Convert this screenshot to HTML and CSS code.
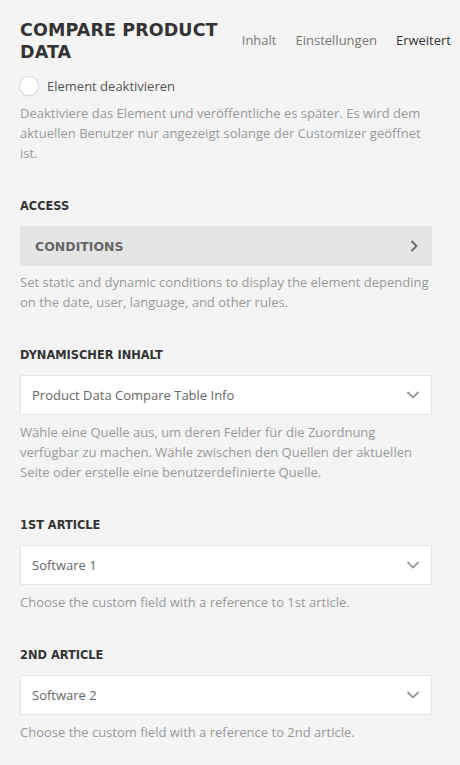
FILE: index.html
```html
<!DOCTYPE html>
<html lang="de">
<head>
  <meta charset="UTF-8" />
  <meta name="viewport" content="width=device-width, initial-scale=1.0"/>
  <title>Compare Product Data</title>
  <link rel="stylesheet" href="styles.css">
</head>
<body>
  <header class="panel-header">
    <h1>Compare Product Data</h1>
    <nav class="tabs">
      <a href="#">Inhalt</a>
      <a href="#">Einstellungen</a>
      <a href="#" class="active">Erweitert</a>
    </nav>
  </header>

  <!-- Disable toggle -->
  <section class="field first">
    <label class="toggle">
      <span class="knob"></span>
      Element deaktivieren
    </label>
    <p class="desc">Deaktiviere das Element und veröffentliche es später. Es wird dem aktuellen Benutzer nur angezeigt solange der Customizer geöffnet ist.</p>
  </section>

  <!-- Access -->
  <section class="field">
    <h3>Access</h3>
    <div class="conditions">
      <span>Conditions</span>
      <svg width="10" height="14" viewBox="0 0 10 14"><polyline points="2.5,2 7.5,7 2.5,12" fill="none" stroke="#666" stroke-width="1.8"/></svg>
    </div>
    <p class="desc">Set static and dynamic conditions to display the element depending on the date, user, language, and other rules.</p>
  </section>

  <section class="field">
    <h3>Dynamischer Inhalt</h3>
    <div class="select">
      <span>Product Data Compare Table Info</span>
      <svg width="14" height="10" viewBox="0 0 14 10"><polyline points="1.5,2 7,7.5 12.5,2" fill="none" stroke="#999" stroke-width="1.8"/></svg>
    </div>
    <p class="desc">Wähle eine Quelle aus, um deren Felder für die Zuordnung verfügbar zu machen. Wähle zwischen den Quellen der aktuellen Seite oder erstelle eine benutzerdefinierte Quelle.</p>
  </section>

  <section class="field">
    <h3>1st Article</h3>
    <div class="select">
      <span>Software 1</span>
      <svg width="14" height="10" viewBox="0 0 14 10"><polyline points="1.5,2 7,7.5 12.5,2" fill="none" stroke="#999" stroke-width="1.8"/></svg>
    </div>
    <p class="desc">Choose the custom field with a reference to 1st article.</p>
  </section>

  <section class="field">
    <h3>2nd Article</h3>
    <div class="select">
      <span>Software 2</span>
      <svg width="14" height="10" viewBox="0 0 14 10"><polyline points="1.5,2 7,7.5 12.5,2" fill="none" stroke="#999" stroke-width="1.8"/></svg>
    </div>
    <p class="desc">Choose the custom field with a reference to 2nd article.</p>
  </section>
</body>
</html>
```

FILE: styles.css
```css
* {
  box-sizing: border-box;
  margin: 0;
  padding: 0;
}
body {
  font-family: 'Open Sans', sans-serif;
  font-size: 13px;
  background: #f4f4f4;
  color: #555;
  padding: 0 28px 0 20px;
}
.panel-header {
  display: flex;
  justify-content: space-between;
  align-items: center;
  padding-top: 16px;
  height: 66px;
}
.panel-header h1 {
  font-family: 'DejaVu Sans', sans-serif;
  font-size: 17.5px;
  font-weight: 600;
  line-height: 22px;
  letter-spacing: 0.1px;
  text-transform: uppercase;
  color: #333;
  width: 205px;
}
.tabs {
  display: flex;
  gap: 19px;
  margin-right: -19px;
  padding-bottom: 2px;
}
.tabs a {
  color: #777;
  text-decoration: none;
  font-size: 13px;
}
.tabs a.active {
  color: #333;
}
.field {
  margin-top: 35px;
}
.field.first {
  margin-top: 10px;
}
.toggle {
  display: flex;
  align-items: center;
  gap: 9px;
  color: #555;
  height: 20px;
}
.knob {
  width: 18px;
  height: 18px;
  border-radius: 50%;
  background: #fff;
  box-shadow: 0 0 0 1px #ddd, 0 1px 2px rgba(0,0,0,0.15);
}
.desc {
  color: #999;
  line-height: 20px;
  margin-top: 7px;
}
.field h3 {
  font-family: 'DejaVu Sans', sans-serif;
  font-size: 11.4px;
  font-weight: 700;
  text-transform: uppercase;
  color: #333;
  line-height: 16px;
  margin-bottom: 12px;
}
.conditions {
  display: flex;
  justify-content: space-between;
  align-items: center;
  height: 40px;
  padding: 0 13px 0 15px;
  background: #e5e5e5;
}
.conditions + .desc {
  margin-top: 6px;
}
.conditions span {
  font-family: 'DejaVu Sans', sans-serif;
  font-size: 12.5px;
  font-weight: 600;
  text-transform: uppercase;
  color: #666;
}
.select {
  display: flex;
  justify-content: space-between;
  align-items: center;
  height: 40px;
  padding: 0 11px 0 11px;
  background: #fff;
  border: 1px solid #e5e5e5;
  color: #666;
}
```
